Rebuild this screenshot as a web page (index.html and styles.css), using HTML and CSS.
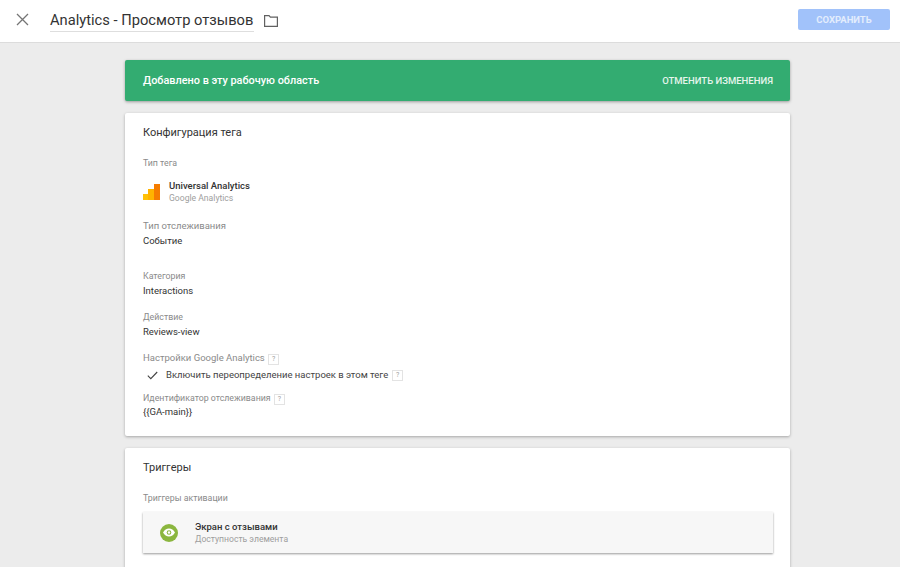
FILE: index.html
```html
<!DOCTYPE html>
<html lang="ru">
<head>
    <meta charset="UTF-8">
    <title>Analytics - Просмотр отзывов</title>
    <link rel="stylesheet" href="styles.css">
</head>
<body>
    <div class="topbar">
        <svg class="close-icon" width="14" height="14" viewBox="0 0 14 14">
            <path d="M2 2L13 13M13 2L2 13" stroke="#757575" stroke-width="1.3" fill="none"/>
        </svg>
        <div class="tag-name">Analytics - Просмотр отзывов</div>
        <svg class="folder-icon" width="16" height="14" viewBox="0 0 16 14">
            <path d="M1.6 1.6H6L7.4 3.2H14.4V12.4H1.6Z" stroke="#616161" stroke-width="1.2" fill="none"/>
        </svg>
        <button class="save-button">СОХРАНИТЬ</button>
    </div>

    <div class="content">
        <div class="notice">
            <span class="notice-text">Добавлено в эту рабочую область</span>
            <span class="notice-action">ОТМЕНИТЬ ИЗМЕНЕНИЯ</span>
        </div>

        <div class="card card-config">
            <h2 class="card-title">Конфигурация тега</h2>

            <div class="small-label tag-type-label">Тип тега</div>
            <div class="tag-type">
                <svg width="17" height="16" viewBox="0 0 17 16">
                    <rect x="0" y="10" width="6" height="6" fill="#ffc107"/>
                    <rect x="5" y="5" width="6" height="11" fill="#ffb300"/>
                    <rect x="11" y="0" width="6" height="16" fill="#f57c00"/>
                </svg>
                <div>
                    <div class="tag-type-name">Universal Analytics</div>
                    <div class="tag-type-sub">Google Analytics</div>
                </div>
            </div>

            <div class="label track-label">Тип отслеживания</div>
            <div class="value">Событие</div>

            <div class="small-label category-label">Категория</div>
            <div class="value">Interactions</div>

            <div class="small-label action-label">Действие</div>
            <div class="value">Reviews-view</div>

            <div class="label settings-label">Настройки Google Analytics <span class="help">?</span></div>
            <div class="check-row">
                <svg width="11" height="9" viewBox="0 0 11 9">
                    <path d="M0.8 4.6L3.8 7.6L10.2 1" stroke="#424242" stroke-width="1.1" fill="none"/>
                </svg>
                <span>Включить переопределение настроек в этом теге</span>
                <span class="help">?</span>
            </div>

            <div class="small-label tracking-label">Идентификатор отслеживания <span class="help">?</span></div>
            <div class="value">{{GA-main}}</div>
        </div>

        <div class="card card-triggers">
            <h2 class="card-title">Триггеры</h2>
            <div class="small-label triggers-label">Триггеры активации</div>
            <div class="trigger">
                <div class="trigger-icon">
                    <svg width="12" height="9" viewBox="0 0 12 9">
                        <path d="M0 4.5C1.5 1.7 3.5 0.4 6 0.4S10.5 1.7 12 4.5C10.5 7.3 8.5 8.6 6 8.6S1.5 7.3 0 4.5Z" fill="#fff"/>
                        <circle cx="6" cy="4.5" r="2.3" fill="#8bb63f"/>
                        <circle cx="6" cy="4.5" r="1.2" fill="#fff"/>
                    </svg>
                </div>
                <div>
                    <div class="trigger-name">Экран с отзывами</div>
                    <div class="trigger-sub">Доступность элемента</div>
                </div>
            </div>
        </div>
    </div>
</body>
</html>
```

FILE: styles.css
```css
html, body {
    height: 567px;
    overflow: hidden;
}
body {
    margin: 0;
    background-color: #ececec;
    color: #212121;
    font-family: Roboto, "Liberation Sans", sans-serif;
    font-size: 10px;
}
.topbar {
    height: 42px;
    display: flex;
    align-items: center;
    padding-left: 15px;
    padding-right: 10px;
    background-color: white;
    border-bottom: 1px solid #dcdcdc;
}
.close-icon {
    margin-top: -4px;
    margin-right: 21px;
}
.tag-name {
    font-size: 14.7px;
    color: #333;
    line-height: 21px;
    width: 204px;
    white-space: nowrap;
    border-bottom: 1px solid #dedede;
    margin-right: 9px;
}
.save-button {
    margin-left: auto;
    margin-top: -4px;
    width: 92px;
    height: 21px;
    padding: 0;
    border: none;
    border-radius: 2px;
    background-color: #a1c2fa;
    color: #e3edfd;
    font-family: inherit;
    font-size: 9.5px;
    font-weight: 700;
}
.content {
    width: 665px;
    margin-left: 125px;
    padding-top: 17px;
}
.notice {
    height: 41px;
    display: flex;
    align-items: center;
    justify-content: space-between;
    padding: 0 17px 0 18px;
    box-sizing: border-box;
    border-radius: 2px;
    background-color: #33ac71;
    color: white;
    box-shadow: 0 1px 3px rgba(0,0,0,0.35);
}
.notice-text {
    font-size: 10.9px;
    font-weight: 500;
    margin-bottom: 1px;
}
.notice-action {
    font-size: 9.5px;
    font-weight: 500;
    color: #e6f5ec;
    margin-bottom: 1px;
}
.card {
    box-sizing: border-box;
    background-color: white;
    border-radius: 2px;
    box-shadow: 0 1px 3px rgba(0,0,0,0.3);
    padding-left: 18px;
    padding-right: 17px;
}
.card-config {
    margin-top: 12px;
    height: 323px;
    padding-top: 13px;
}
.card-triggers {
    margin-top: 12px;
    height: 140px;
    padding-top: 13px;
}
.card-title {
    margin: 0;
    font-size: 11px;
    font-weight: 400;
    line-height: 14px;
    color: #333;
}
.label, .small-label {
    line-height: 12px;
    color: #8a8a8a;
}
.label {
    font-size: 9.5px;
}
.small-label {
    font-size: 8.8px;
}
.value {
    font-size: 9.5px;
    line-height: 12px;
    margin-top: 3px;
    color: #333;
}
.tag-type-label {
    margin-top: 17px;
}
.tag-type {
    display: flex;
    align-items: center;
    gap: 9px;
    margin-top: 10px;
}
.tag-type-name {
    font-size: 9.5px;
    font-weight: 500;
    line-height: 13px;
    color: #333;
}
.tag-type-sub {
    font-size: 8.6px;
    line-height: 12px;
    color: #9e9e9e;
}
.track-label {
    margin-top: 16px;
}
.category-label {
    margin-top: 23px;
}
.action-label {
    margin-top: 14px;
}
.settings-label {
    margin-top: 14px;
}
.check-row {
    display: flex;
    align-items: center;
    margin-top: 4px;
    padding-left: 4px;
    font-size: 9.5px;
    line-height: 12px;
    color: #444;
}
.check-row svg {
    margin-right: 8px;
}
.check-row .help {
    margin-left: 4px;
}
.tracking-label {
    margin-top: 11px;
}
.tracking-label + .value {
    margin-top: 1px;
}
.help {
    display: inline-block;
    width: 9px;
    height: 9px;
    line-height: 9px;
    text-align: center;
    font-size: 7px;
    color: #9e9e9e;
    border: 1px solid #e3e3e3;
    margin-left: 1px;
}
.triggers-label {
    margin-top: 17px;
}
.trigger {
    display: flex;
    align-items: center;
    gap: 17px;
    height: 41px;
    margin-top: 8px;
    padding-left: 17px;
    background-color: #f7f7f7;
    box-shadow: 0 1px 2px rgba(0,0,0,0.4);
}
.trigger-icon {
    width: 18px;
    height: 18px;
    display: flex;
    align-items: center;
    justify-content: center;
    border-radius: 50%;
    background-color: #8bb63f;
}
.trigger-name {
    font-size: 9.5px;
    font-weight: 500;
    line-height: 13px;
    color: #333;
}
.trigger-sub {
    font-size: 8.6px;
    line-height: 12px;
    color: #9e9e9e;
}
```
